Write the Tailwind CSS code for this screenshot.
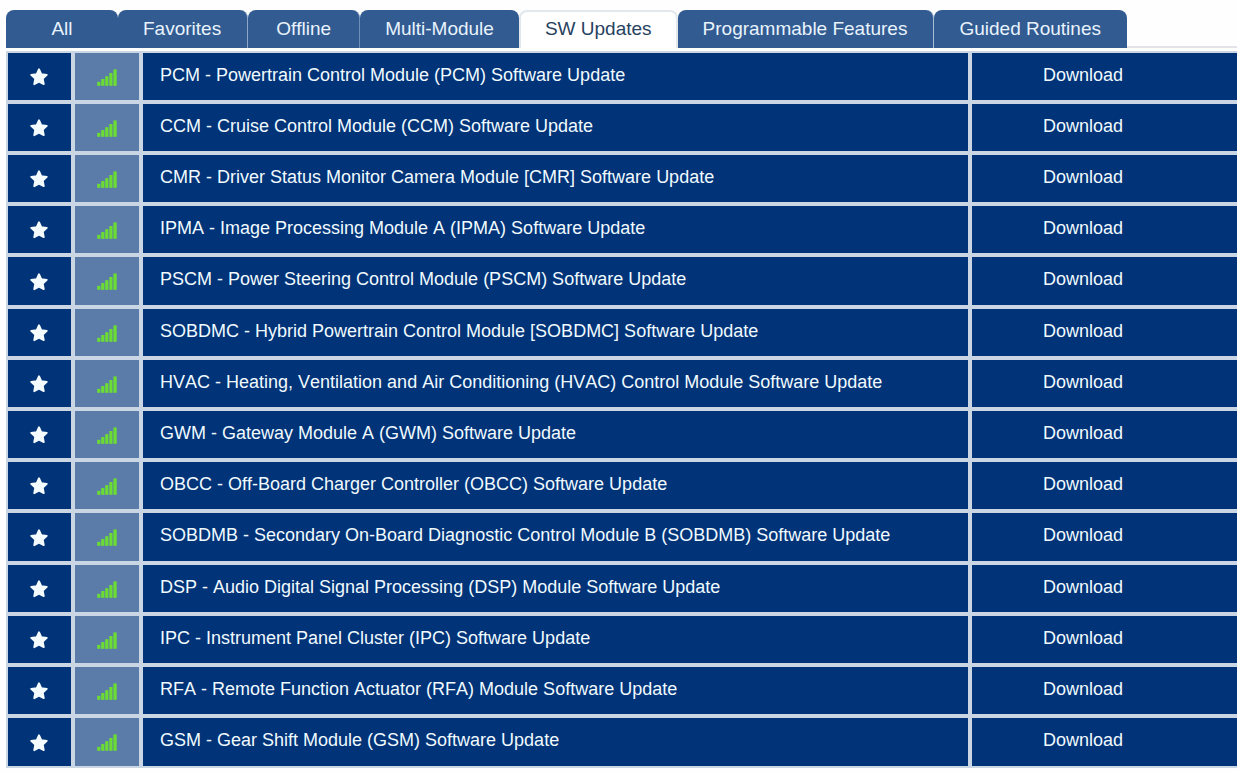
<!DOCTYPE html>
<html lang="en">
<head>
    <meta charset="UTF-8">
    <meta name="viewport" content="width=device-width, initial-scale=1.0">
    <title>SW Updates</title>
    <script src="https://cdn.jsdelivr.net/npm/@tailwindcss/browser@4"></script>
</head>
<body class="bg-[#fefefe] font-['Liberation_Sans',Arial,sans-serif] [font-kerning:none] overflow-x-hidden">

    <!-- Tabs -->
    <nav class="flex pl-[6px] pt-[10px] text-[19px] leading-[36px] text-[#e9f3fd]" role="tablist">
        <button role="tab" class="h-[38px] min-w-[112px] px-[25px] rounded-t-lg bg-[#315b91]">All</button>
        <button role="tab" class="h-[38px] min-w-[112px] pl-[25px] pr-[26px] rounded-t-lg bg-[#315b91] border-r border-[#8ea7c8]">Favorites</button>
        <button role="tab" class="h-[38px] min-w-[112px] px-[26px] rounded-t-lg bg-[#315b91] border-r border-[#6f8fb8]">Offline</button>
        <button role="tab" class="h-[38px] min-w-[112px] px-[25px] rounded-t-lg bg-[#315b91]">Multi-Module</button>
        <button role="tab" aria-selected="true" class="h-[38px] min-w-[112px] px-[24px] rounded-t-lg bg-white border-2 border-b-0 border-[#e2e7ec] text-[#27425f] pb-[2px] leading-[34px]">SW Updates</button>
        <button role="tab" class="h-[38px] min-w-[112px] pl-[25px] pr-[26px] rounded-t-lg bg-[#315b91] border-r border-[#a9bcd5]">Programmable Features</button>
        <button role="tab" class="h-[38px] min-w-[112px] pl-[25px] pr-[26px] rounded-t-lg bg-[#315b91]">Guided Routines</button>
        <div class="flex-1 border-b-2 border-[#e2e4e7]"></div>
    </nav>

    <!-- Module list -->
    <main class="pl-[6px] pt-[3px]">
        <table class="w-full table-fixed border-separate border-spacing-0 text-[18px] leading-[20px] text-[#f0faff]">
            <colgroup>
                <col class="w-[67px]">
                <col class="w-[68px]">
                <col>
                <col class="w-[267px]">
            </colgroup>
            <tbody id="moduleRows"></tbody>
        </table>
    </main>

    <script>
        const modules = [
            "PCM - Powertrain Control Module (PCM) Software Update",
            "CCM - Cruise Control Module (CCM) Software Update",
            "CMR - Driver Status Monitor Camera Module [CMR] Software Update",
            "IPMA - Image Processing Module A (IPMA) Software Update",
            "PSCM - Power Steering Control Module (PSCM) Software Update",
            "SOBDMC - Hybrid Powertrain Control Module [SOBDMC] Software Update",
            "HVAC - Heating, Ventilation and Air Conditioning (HVAC) Control Module Software Update",
            "GWM - Gateway Module A (GWM) Software Update",
            "OBCC - Off-Board Charger Controller (OBCC) Software Update",
            "SOBDMB - Secondary On-Board Diagnostic Control Module B (SOBDMB) Software Update",
            "DSP - Audio Digital Signal Processing (DSP) Module Software Update",
            "IPC - Instrument Panel Cluster (IPC) Software Update",
            "RFA - Remote Function Actuator (RFA) Module Software Update",
            "GSM - Gear Shift Module (GSM) Software Update"
        ];

        const starIcon = `
            <svg class="w-[18px] h-[18px]" viewBox="0 0 18 18" fill="#f4fcff" stroke="#f4fcff" stroke-width="1.8" stroke-linejoin="round">
                <path d="M9 1.2 11.3 6.2 16.8 6.9 12.8 10.7 13.8 16.2 9 13.7 4.2 16.2 5.2 10.7 1.2 6.9 6.7 6.2Z"/>
            </svg>`;

        // Five bars, rising left to right
        const signalIcon = `
            <svg class="w-[20px] h-[17px]" viewBox="0 0 20 17" fill="#6bdc33">
                <rect x="0.2" y="12.8" width="3.2" height="4"/>
                <rect x="4.2" y="10" width="3.2" height="6.8"/>
                <rect x="8.2" y="7.2" width="3.2" height="9.6"/>
                <rect x="12.3" y="4" width="3.2" height="12.8"/>
                <rect x="16.4" y="0.4" width="3.3" height="16.4"/>
            </svg>`;

        document.getElementById('moduleRows').innerHTML = modules.map(name => `
            <tr class="h-[51px] nth-[5n]:h-[52px] last:h-[52px]">
                <td class="border-2 border-[#cbd6e4] bg-[#003377] p-0">
                    <button class="flex w-full justify-center pt-[1px] pr-[1px]" aria-label="Favorite">${starIcon}</button>
                </td>
                <td class="border-2 border-[#cbd6e4] bg-[#5b7ba9] p-0">
                    <div class="flex justify-center pt-[1px]">${signalIcon}</div>
                </td>
                <td class="border-2 border-[#cbd6e4] bg-[#003377] p-0 pl-[17px] pb-[4px]">${name}</td>
                <td class="border-2 border-r-0 border-[#cbd6e4] bg-[#003377] p-0 pl-[71px] pb-[4px]">
                    <button class="block">Download</button>
                </td>
            </tr>`).join('');
    </script>
</body>
</html>
